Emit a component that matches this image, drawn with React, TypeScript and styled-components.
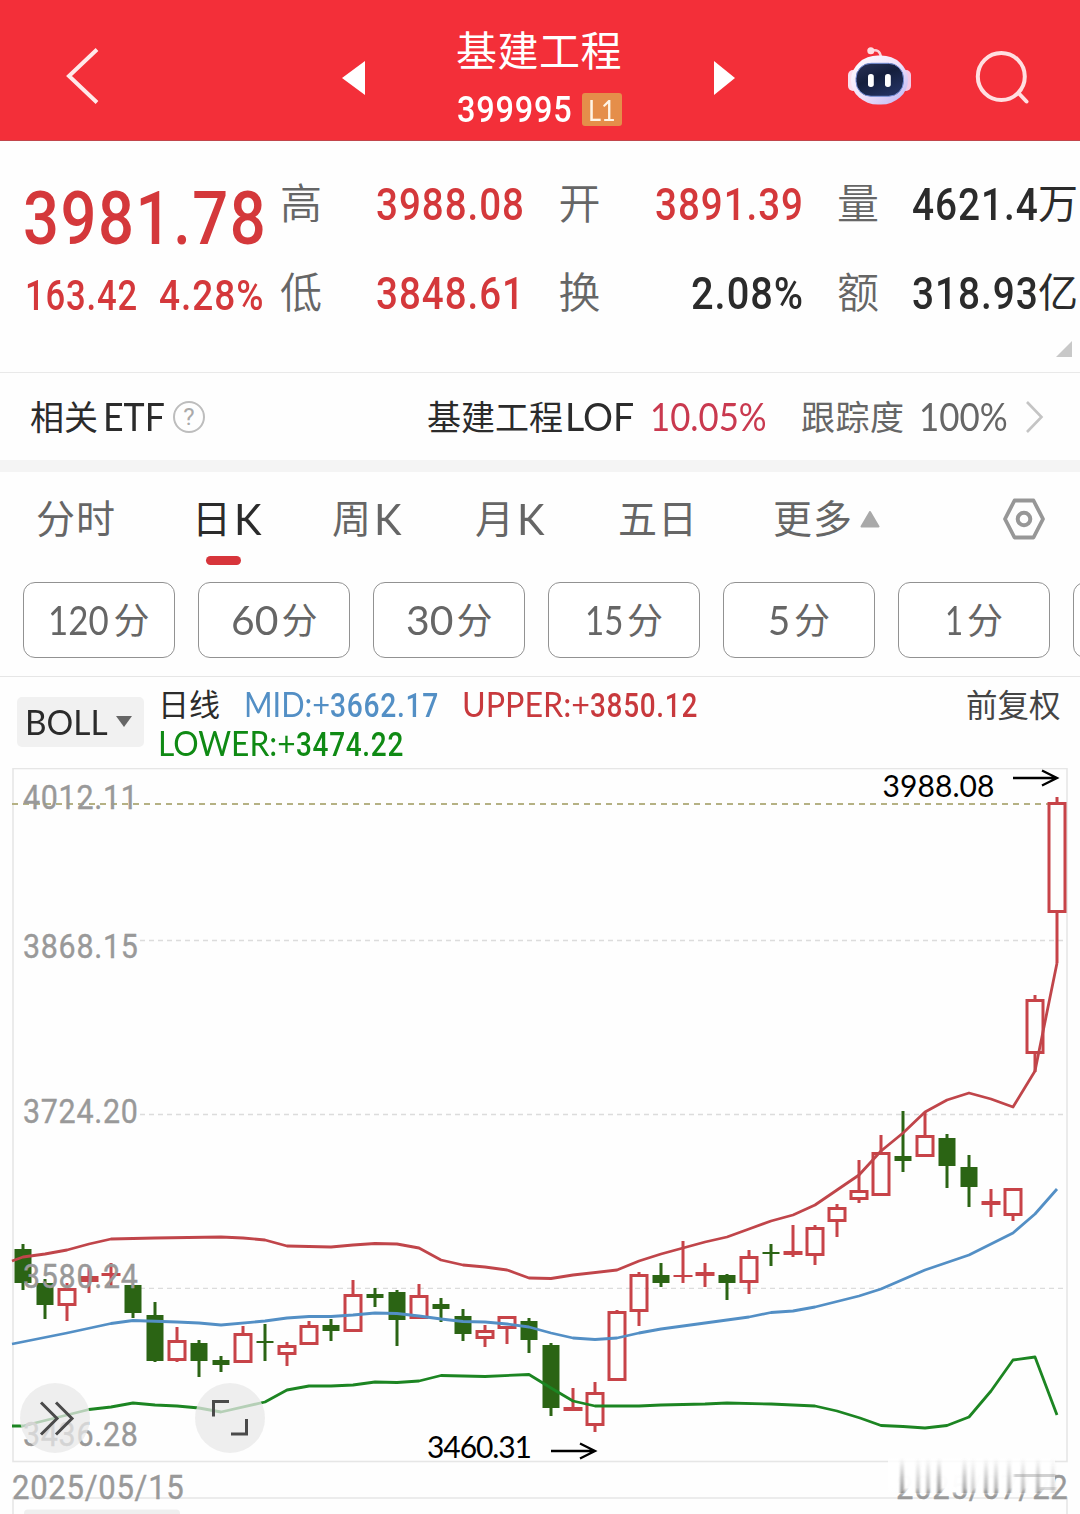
import React, { useLayoutEffect, useRef, useState } from 'react';
import styled, { createGlobalStyle } from 'styled-components';

const DIGITS = `Roboto, "Noto Sans CJK SC", sans-serif`;
const SANS = `Lato, "Noto Sans CJK SC", sans-serif`;
const CJK = `"Noto Sans CJK SC", sans-serif`;

const RED = '#d4383b';
const INK = '#2b2b2b';
const GREY = '#666666';

const GlobalStyle = createGlobalStyle`
  body { margin: 0; background: #fff; }
  * { box-sizing: border-box; }
`;

const Page = styled.div`
  width: 1080px;
  height: 1514px;
  overflow: hidden;
  display: flex;
  flex-direction: column;
  background: #fefefe;
  color: ${INK};
  font-family: ${CJK};
`;

/* ---------- text fitted to a given width ---------- */

const FitBox = styled.span<{ $w: number; $size: number; $color?: string; $weight?: number; $font?: string; $dy?: number; $ml?: number; $gap: number }>`
  display: block;
  flex: none;
  width: ${p => p.$w}px;
  height: ${p => p.$size}px;
  line-height: ${p => p.$size}px;
  margin-left: ${p => p.$ml ?? 0}px;
  white-space: nowrap;
  font-family: ${p => p.$font ?? DIGITS};
  font-size: ${p => p.$size}px;
  font-weight: ${p => p.$weight ?? 400};
  letter-spacing: ${p => p.$gap}px;
  color: ${p => p.$color ?? 'inherit'};
  translate: 0 ${p => p.$dy ?? 0}px;
`;

const FitInner = styled.span`
  display: inline-block;
  transform-origin: 0 50%;
`;

type FitProps = {
  w: number; size: number; color?: string; weight?: number; font?: string; dy?: number; ml?: number; children: string;
};

function Fit({ w, size, color, weight, font, dy, ml, children }: FitProps) {
  const ref = useRef<HTMLSpanElement>(null);
  const [k, setK] = useState(1);
  const gap = font ? 0 : size * 0.025;
  useLayoutEffect(() => {
    if (ref.current) setK(w / (ref.current.offsetWidth - gap));
  }, [w, gap, children]);
  return (
    <FitBox $w={w} $size={size} $color={color} $weight={weight} $font={font} $dy={dy} $ml={ml} $gap={gap}>
      <FitInner ref={ref} style={{ transform: `scaleX(${k})` }}>{children}</FitInner>
    </FitBox>
  );
}

/* ---------- header ---------- */

const Header = styled.header`
  height: 141px;
  flex: none;
  display: grid;
  grid-template-columns: 340px 28px 344px 24px 110px 66px 168px;
  align-items: center;
  background: #f32f39;
  border-bottom: 1px solid #c2454b;
`;

const BackArea = styled.div`
  padding: 12px 0 0 64px;
  svg { display: block; }
`;

const IconArea = styled.div<{ $top?: number; $left?: number }>`
  padding: ${p => p.$top ?? 0}px 0 0 ${p => p.$left ?? 0}px;
  svg { display: block; }
`;

const TitleBlock = styled.div`
  display: flex;
  flex-direction: column;
  align-items: center;
  padding-top: 6px;
  color: #fff;
`;

const Title = styled.h1`
  margin: 0;
  font-size: 41px;
  line-height: 56px;
  font-weight: 400;
  letter-spacing: 0.5px;
  translate: -1px 0;
`;

const CodeLine = styled.div`
  display: flex;
  align-items: center;
  height: 34px;
  margin-top: 17px;
  translate: -1px 0;
`;

const Level = styled.span`
  display: flex;
  align-items: center;
  justify-content: center;
  width: 40px;
  height: 33px;
  margin-left: 10px;
  border-radius: 3px;
  background: #e58e4a;
  color: #fff4e6;
`;

/* ---------- quote ---------- */

const Quote = styled.section`
  position: relative;
  height: 232px;
  flex: none;
  display: flex;
  border-bottom: 1px solid #e9e9e9;
`;

const PriceBlock = styled.div`
  width: 280px;
  flex: none;
  padding: 40px 0 0 23px;
  color: ${RED};
`;

const ChangeRow = styled.div`
  display: flex;
  margin-top: 19px;
  padding-left: 2px;
`;

const Stats = styled.div`
  display: grid;
  grid-template-columns: 244px 244px 240px;
  grid-template-rows: 89px 89px;
  column-gap: 34.5px;
  padding-top: 19px;
  flex: none;
`;

const Stat = styled.div`
  display: flex;
  align-items: center;
  justify-content: space-between;
`;

const StatLabel = styled.span`
  font-size: 42px;
  line-height: 60px;
  color: ${GREY};
  font-weight: 350;
  translate: 0 -4px;
`;

const StatValue = styled.span`
  display: flex;
  align-items: center;
`;

const Unit = styled.span`
  font-size: 40px;
  line-height: 60px;
  translate: 0 -4px;
  width: 39px;
`;

const Corner = styled.i`
  position: absolute;
  right: 8px;
  bottom: 15px;
  border-left: 16px solid transparent;
  border-bottom: 16px solid #c8c8c8;
`;

/* ---------- related fund ---------- */

const FundRow = styled.section`
  height: 87px;
  flex: none;
  display: flex;
  align-items: center;
  padding-left: 30px;
`;

const Han = styled.span<{ $size: number; $color?: string; $ls?: number; $dy?: number; $w?: number; $ml?: number }>`
  flex: none;
  font-size: ${p => p.$size}px;
  line-height: ${p => p.$size}px;
  color: ${p => p.$color ?? INK};
  letter-spacing: ${p => p.$ls ?? 0}px;
  width: ${p => (p.$w ? `${p.$w}px` : 'auto')};
  margin-left: ${p => p.$ml ?? 0}px;
  white-space: nowrap;
  translate: 0 ${p => p.$dy ?? 0}px;
`;

const Help = styled.span`
  flex: none;
  width: 32px;
  height: 32px;
  margin-left: 8px;
  border: 2px solid #bdbdbd;
  border-radius: 50%;
  display: flex;
  align-items: center;
  justify-content: center;
  font: 24px ${DIGITS};
  color: #aaa;
`;

const FundLink = styled.div`
  display: flex;
  align-items: center;
  margin-left: 222px;
`;

const Band = styled.div`
  height: 12px;
  flex: none;
  background: #f4f4f4;
`;

/* ---------- tabs and periods ---------- */

const Tabs = styled.nav`
  height: 110px;
  flex: none;
  display: grid;
  grid-template-columns: 156px 140px 143px 143px 155px 229px 1fr;
  padding-left: 36px;
`;

const Tab = styled.div<{ $on?: boolean }>`
  position: relative;
  display: flex;
  align-items: center;
  height: 94px;
  color: ${p => (p.$on ? INK : GREY)};
`;

const ActiveBar = styled.i`
  position: absolute;
  left: 14px;
  top: 84px;
  width: 35px;
  height: 9px;
  border-radius: 5px;
  background: #d7353b;
`;

const UpMark = styled.svg`
  margin-left: 7px;
`;

const Periods = styled.div`
  height: 95px;
  flex: none;
  display: flex;
  gap: 23px;
  padding-left: 23px;
  border-bottom: 1px solid #e6e6e6;
`;

const Period = styled.button`
  flex: none;
  width: 152px;
  height: 76px;
  padding: 0;
  border: 1px solid #929292;
  border-radius: 12px;
  background: #fff;
  display: flex;
  align-items: center;
  justify-content: center;
  gap: 4px;
  color: ${GREY};
  font-family: ${CJK};
`;

/* ---------- indicator bar ---------- */

const Indicator = styled.section`
  height: 91px;
  flex: none;
  display: flex;
  padding-left: 17px;
`;

const Picker = styled.div`
  flex: none;
  width: 127px;
  height: 50px;
  margin-top: 20px;
  padding-left: 8px;
  border-radius: 5px;
  background: #f1f1f1;
  display: flex;
  align-items: center;
`;

const DownMark = styled.i`
  margin-left: 8px;
  margin-top: -2px;
  border: 8.5px solid transparent;
  border-top: 11px solid #666;
  border-bottom: 0;
`;

const Readings = styled.div`
  width: 822px;
  padding: 8px 0 0 14px;
`;

const ReadingLine = styled.div`
  display: flex;
  align-items: center;
  height: 39px;
`;

const Adjust = styled.div`
  padding-top: 11px;
`;

/* ---------- chart ---------- */

const ChartArea = styled.section`
  position: relative;
  height: 746px;
  flex: none;
`;

const RoundButton = styled.button<{ $x: number }>`
  position: absolute;
  left: ${p => p.$x}px;
  top: 615px;
  width: 70px;
  height: 70px;
  padding: 0;
  border: 0;
  border-radius: 50%;
  background: rgba(232, 232, 232, 0.75);
  svg { display: block; }
`;

type Candle = [number, number, number, number, 'u' | 'd'];

// wick top, body top, body bottom, wick bottom, direction
const candles: Candle[] = [
  [1244, 1249, 1283, 1290, 'd'], [1279, 1283, 1305, 1319, 'd'], [1283, 1288, 1306, 1321, 'u'],
  [1268, 1276, 1282, 1293, 'u'], [1263, 1273, 1276, 1286, 'u'], [1285, 1285, 1313, 1318, 'd'],
  [1302, 1315, 1361, 1362, 'd'], [1327, 1340, 1361, 1362, 'u'], [1340, 1343, 1361, 1377, 'd'],
  [1356, 1360, 1365, 1372, 'd'], [1326, 1333, 1363, 1363, 'u'], [1324, 1341, 1343, 1361, 'd'],
  [1342, 1345, 1355, 1366, 'u'], [1321, 1325, 1345, 1345, 'u'], [1319, 1325, 1331, 1341, 'd'],
  [1280, 1294, 1332, 1332, 'u'], [1288, 1294, 1298, 1307, 'd'], [1290, 1292, 1320, 1346, 'd'],
  [1284, 1295, 1319, 1319, 'u'], [1298, 1304, 1309, 1322, 'd'], [1309, 1316, 1334, 1341, 'd'],
  [1325, 1330, 1339, 1347, 'u'], [1316, 1316, 1329, 1344, 'u'], [1318, 1321, 1340, 1353, 'd'],
  [1343, 1345, 1408, 1416, 'd'], [1388, 1407, 1411, 1411, 'u'], [1382, 1392, 1426, 1432, 'u'],
  [1310, 1311, 1381, 1381, 'u'], [1272, 1274, 1312, 1326, 'u'], [1263, 1275, 1283, 1287, 'd'],
  [1241, 1275, 1277, 1283, 'u'], [1263, 1272, 1276, 1287, 'u'], [1274, 1275, 1283, 1300, 'd'],
  [1250, 1256, 1283, 1294, 'u'], [1244, 1252, 1254, 1266, 'd'], [1225, 1251, 1255, 1257, 'u'],
  [1225, 1227, 1256, 1265, 'u'], [1204, 1207, 1222, 1237, 'u'], [1160, 1190, 1200, 1203, 'u'],
  [1135, 1152, 1196, 1196, 'u'], [1111, 1156, 1161, 1172, 'd'], [1112, 1135, 1157, 1157, 'u'],
  [1134, 1138, 1166, 1188, 'd'], [1155, 1167, 1187, 1207, 'd'], [1189, 1201, 1205, 1217, 'u'],
  [1188, 1188, 1216, 1221, 'u'], [995, 999, 1054, 1072, 'u'], [797, 802, 913, 963, 'u'],
];

const upper = '12,1261 23,1257 45,1254 67,1250 89,1244 111,1239 155,1238 221,1237 243,1238 265,1240 287,1246 331,1247 353,1245 375,1243.5 397,1244 419,1248 441,1260 463,1265 485,1267 507,1270 529,1278 551,1278.5 573,1275 617,1270 639,1261 661,1254 683,1248 705,1242 727,1237 749,1229 771,1221 793,1215 815,1205 837,1190 859,1175 881,1151 903,1133 925,1112 947,1100 969,1093 991,1099 1013,1107 1035,1071 1057,963';
const mid = '12,1344 67,1333 111,1323.5 133,1320.5 177,1322 199,1323 221,1325 265,1321 287,1318 309,1316.5 331,1316.5 353,1315 375,1313 397,1313.5 419,1316 441,1319 463,1321.5 485,1322 507,1324 529,1327 551,1333 573,1338 595,1339.5 617,1338 639,1333 661,1329 705,1323 749,1317 771,1312.5 793,1311 815,1307 859,1296 881,1289 925,1270 969,1255 1013,1233 1035,1214 1057,1189';
const lower = '12,1426 23,1426 89,1409.5 111,1407 133,1403 155,1405 177,1406 199,1408 221,1412 265,1402 287,1390 309,1386 331,1386 353,1385 375,1382 397,1382.5 419,1381 441,1375.5 485,1376.5 529,1374.5 551,1388 573,1401 595,1406 639,1406 661,1405 705,1404 727,1403 771,1404 815,1406 837,1411 860,1418 881,1425.5 903,1426.5 925,1428 947,1425.5 969,1417 991,1391 1013,1360 1035,1357 1057,1415';

const UP = '#c74348';
const DOWN = '#2b6414';

function CandleMark({ x, c }: { x: number; c: Candle }) {
  const [wt, bt, bb, wb, dir] = c;
  const color = dir === 'u' ? UP : DOWN;
  const hollow = dir === 'u' && bb - bt > 8;
  return (
    <g fill={color}>
      {wt < bt && <rect x={x - 1.5} y={wt} width={3} height={bt - wt + 1} />}
      {wb > bb && <rect x={x - 1.5} y={bb - 1} width={3} height={wb - bb + 1} />}
      {hollow
        ? <rect x={x - 8} y={bt + 1.5} width={16} height={bb - bt - 3} fill="none" stroke={color} strokeWidth={3} />
        : <rect x={dir === 'u' ? x - 9.5 : x - 8.5} y={bt} width={dir === 'u' ? 19 : 17} height={bb - bt} />}
    </g>
  );
}

const Scale = styled.text`
  font-family: ${DIGITS};
  font-size: 34px;
  letter-spacing: 0.8px;
  fill: #999;
  stroke: #999;
  stroke-width: 0.4px;
`;

const Callout = styled.text`
  font-family: ${SANS};
  font-size: 30px;
  fill: #000;
`;

const smears: [number, number][] = [
  [902, 1], [918, 0.6], [928, 0.65], [939, 1], [964.5, 0.9], [973, 0.5], [986, 0.8], [996, 0.75], [1009, 0.75], [1023, 0.65], [1038, 0.8], [1053, 0.4],
];

function KChart() {
  return (
    <svg width="1080" height="746" viewBox="0 768 1080 746" display="block">
      <defs>
        <linearGradient id="fade" x1="0" y1="0" x2="0" y2="1">
          <stop offset="0" stopColor="#fff" stopOpacity="0.7" />
          <stop offset="0.2" stopColor="#fff" stopOpacity="1" />
          <stop offset="0.78" stopColor="#fff" stopOpacity="0.97" />
          <stop offset="1" stopColor="#fff" stopOpacity="0" />
        </linearGradient>
        <linearGradient id="smear" x1="0" y1="0" x2="0" y2="1">
          <stop offset="0" stopColor="#808080" stopOpacity="0" />
          <stop offset="0.6" stopColor="#808080" stopOpacity="0.5" />
          <stop offset="1" stopColor="#808080" stopOpacity="0.8" />
        </linearGradient>
        <filter id="soft" x="-5%" y="-5%" width="110%" height="110%"><feGaussianBlur stdDeviation="0.9 0.5" /></filter>
      </defs>
      <g stroke="#e6e6e6" strokeWidth="1.6" fill="none">
        <rect x="13" y="768.5" width="1054" height="693" />
        <path d="M13 1514V1498H1067V1514" />
      </g>
      <rect x="24" y="1509.5" width="156" height="20" rx="4" fill="#efefef" />
      <g stroke="#dcdcdc" strokeWidth="1.3" strokeDasharray="5 4">
        <path d="M140 940.5H1066M140 1114.5H1066M140 1288.3H1066" />
      </g>
      <path d="M12 804H1048" stroke="#b5b184" strokeWidth="1.8" strokeDasharray="6 5" />
      {candles.map((c, i) => <CandleMark key={i} x={23 + i * 22} c={c} />)}
      <g fill="none" strokeWidth="2.8" strokeLinejoin="round">
        <polyline points={mid} stroke="#538fc5" />
        <polyline points={upper} stroke="#c0454a" />
        <polyline points={lower} stroke="#1c8522" />
      </g>
      <Scale x="23" y="809" textLength="115.500" lengthAdjust="spacingAndGlyphs">4012.11</Scale>
      <Scale x="23" y="958" textLength="115.500" lengthAdjust="spacingAndGlyphs">3868.15</Scale>
      <Scale x="23" y="1123" textLength="115.500" lengthAdjust="spacingAndGlyphs">3724.20</Scale>
      <Scale x="23" y="1288" textLength="115.500" lengthAdjust="spacingAndGlyphs">3580.24</Scale>
      <Scale x="23" y="1446" textLength="115.500" lengthAdjust="spacingAndGlyphs">3436.28</Scale>
      <Scale x="12" y="1498.5" textLength="172.500" lengthAdjust="spacingAndGlyphs">2025/05/15</Scale>
      <Scale x="896" y="1498.5" textLength="172.500" lengthAdjust="spacingAndGlyphs">2025/07/22</Scale>
      <rect x="888" y="1458" width="167" height="38" fill="url(#fade)" />
      <g filter="url(#soft)">
        {smears.map(([x, o]) => <rect key={x} x={x - 2} y="1458" width="4" height="35" fill="url(#smear)" opacity={o} />)}
        <rect x="1014" y="1474" width="42" height="3" fill="#999" opacity="0.45" />
        <rect x="1040" y="1487" width="16" height="3" fill="#999" opacity="0.35" />
      </g>
      <Callout x="882.500" y="797" textLength="112" lengthAdjust="spacing">3988.08</Callout>
      <Callout x="427" y="1458" textLength="105" lengthAdjust="spacing">3460.31</Callout>
      <g fill="none" stroke="#000" strokeWidth="2.3">
        <path d="M1013 778H1057M1042 770.5L1057 778L1042 785.5" />
        <path d="M551 1451H595M580 1443.5L595 1451L580 1458.5" />
      </g>
    </svg>
  );
}

function Robot() {
  return (
    <svg width="66" height="62" viewBox="846 45 66 62">
      <defs>
        <linearGradient id="shell" x1="0" y1="0" x2="1" y2="1">
          <stop offset="0" stopColor="#fff" /><stop offset="0.5" stopColor="#f1e3fa" /><stop offset="1" stopColor="#b9b3f3" />
        </linearGradient>
        <linearGradient id="visor" x1="0" y1="0" x2="0.6" y2="1">
          <stop offset="0" stopColor="#2b3357" /><stop offset="0.5" stopColor="#151f3d" /><stop offset="1" stopColor="#22305f" />
        </linearGradient>
      </defs>
      <path d="M871 51C877 49 880 51 881 57" fill="none" stroke="#fbd3da" strokeWidth="2.4" />
      <circle cx="870.8" cy="50.8" r="3.5" fill="#ffdde2" />
      <rect x="848" y="70" width="10" height="21" rx="5" fill="#fbdfee" />
      <rect x="901" y="70" width="10" height="21" rx="5" fill="#f3c9e6" />
      <rect x="851" y="55.500" width="57" height="49" rx="27" ry="24.500" fill="url(#shell)" />
      <rect x="856" y="63.300" width="47.500" height="33" rx="15" fill="url(#visor)" stroke="#7690d8" strokeWidth="1" />
      <rect x="868" y="74" width="5.8" height="13" rx="2.7" fill="#fff" />
      <rect x="885" y="74" width="5.8" height="13" rx="2.7" fill="#fff" />
    </svg>
  );
}

const tabs: { han: string; latin?: string; on?: boolean; more?: boolean }[] = [
  { han: '分时' },
  { han: '日', latin: 'K', on: true },
  { han: '周', latin: 'K' },
  { han: '月', latin: 'K' },
  { han: '五日' },
  { han: '更多', more: true },
];

const periods: [string, number][] = [['120', 61], ['60', 47], ['30', 47], ['15', 38], ['5', 22], ['1', 18]];

export default function App() {
  return (
    <Page>
      <GlobalStyle />
      <Header>
        <BackArea>
          <svg width="38" height="60" viewBox="64 46 38 60" fill="none" stroke="#ffe9ea" strokeWidth="4">
            <path d="M97 49.5L69 76L97 102.5" />
          </svg>
        </BackArea>
        <IconArea $top={16} $left={2}>
          <svg width="24" height="34" viewBox="0 0 24 34"><path d="M0 17L23 0V34Z" fill="#fff" /></svg>
        </IconArea>
        <TitleBlock>
          <Title>基建工程</Title>
          <CodeLine>
            <Fit w={115} size={37} weight={500}>399995</Fit>
            <Level><Fit w={28} size={29} font={SANS}>L1</Fit></Level>
          </CodeLine>
        </TitleBlock>
        <IconArea $top={16} $left={2}>
          <svg width="22" height="34" viewBox="0 0 22 34"><path d="M0 0L21 17L0 34Z" fill="#fff" /></svg>
        </IconArea>
        <span />
        <IconArea $top={11}><Robot /></IconArea>
        <IconArea $top={14} $left={62}>
          <svg width="56" height="56" viewBox="974 49 56 56" fill="none" stroke="#ffdfe1" strokeWidth="4" strokeLinecap="round">
            <circle cx="1001.3" cy="76.5" r="23.5" />
            <path d="M1018.5 93L1026.5 101.5" />
          </svg>
        </IconArea>
      </Header>

      <Quote>
        <PriceBlock>
          <Fit w={243} size={75} weight={500}>3981.78</Fit>
          <ChangeRow>
            <Fit w={112} size={42} weight={500}>163.42</Fit>
            <Fit w={104} size={42} weight={500} ml={22}>4.28%</Fit>
          </ChangeRow>
        </PriceBlock>
        <Stats>
          <Stat><StatLabel>高</StatLabel><Fit w={148} size={44} weight={500} color={RED}>3988.08</Fit></Stat>
          <Stat><StatLabel>开</StatLabel><Fit w={148} size={44} weight={500} color={RED}>3891.39</Fit></Stat>
          <Stat><StatLabel>量</StatLabel><StatValue><Fit w={126} size={44} weight={500}>4621.4</Fit><Unit>万</Unit></StatValue></Stat>
          <Stat><StatLabel>低</StatLabel><Fit w={148} size={44} weight={500} color={RED}>3848.61</Fit></Stat>
          <Stat><StatLabel>换</StatLabel><Fit w={112} size={44} weight={500}>2.08%</Fit></Stat>
          <Stat><StatLabel>额</StatLabel><StatValue><Fit w={126} size={44} weight={500}>318.93</Fit><Unit>亿</Unit></StatValue></Stat>
        </Stats>
        <Corner />
      </Quote>

      <FundRow>
        <Han $size={34} $w={73} $dy={-1}>相关</Han>
        <Fit w={62} size={38} font={SANS} dy={-1}>ETF</Fit>
        <Help>?</Help>
        <FundLink>
          <Han $size={34} $w={138} $dy={-1}>基建工程</Han>
          <Fit w={69} size={38} font={SANS} dy={-1}>LOF</Fit>
          <Fit w={117} size={38} font={SANS} color="#c9394f" ml={16} dy={-1}>10.05%</Fit>
          <Han $size={34} $color={GREY} $w={103} $ml={34} $dy={-1} $ls={0.5}>跟踪度</Han>
          <Fit w={89} size={38} font={SANS} color={GREY} ml={15} dy={-1}>100%</Fit>
          <IconArea $left={17}>
            <svg width="20" height="34" viewBox="0 0 20 34" fill="none" stroke="#c4c4c4" strokeWidth="2.6"><path d="M2 2L16.500 17L2 32" /></svg>
          </IconArea>
        </FundLink>
      </FundRow>
      <Band />

      <Tabs>
        {tabs.map(t => (
          <Tab key={t.han} $on={t.on}>
            <Han $size={39} $color="inherit" $w={t.latin ? 42 : undefined} $ls={t.latin ? 0 : 1} $dy={-3}>{t.han}</Han>
            {t.latin && <Fit w={28} size={43} font={SANS} dy={-1}>{t.latin}</Fit>}
            {t.more && <UpMark width="20" height="17" viewBox="0 0 20 17"><path d="M10 1L18.500 15.500H1.500Z" fill="#a9a9a9" stroke="#a9a9a9" strokeWidth="2" strokeLinejoin="round" /></UpMark>}
            {t.on && <ActiveBar />}
          </Tab>
        ))}
        <Tab>
          <svg width="44" height="42" viewBox="0 0 44 42" fill="none" stroke="#979797" strokeWidth="3.8" strokeLinejoin="round">
            <path d="M12.500 2.500H31.500L41 21L31.500 39.500H12.500L3 21Z" />
            <circle cx="22" cy="21" r="6.300" strokeWidth="4" />
          </svg>
        </Tab>
      </Tabs>

      <Periods>
        {periods.map(([n, w]) => (
          <Period key={n}>
            <Fit w={w} size={40} font={SANS}>{n}</Fit>
            <Han $size={36} $color={GREY} $dy={-2}>分</Han>
          </Period>
        ))}
        <Period />
      </Periods>

      <Indicator>
        <Picker>
          <Fit w={83} size={35} font={SANS} dy={-1}>BOLL</Fit>
          <DownMark />
        </Picker>
        <Readings>
          <ReadingLine>
            <Han $size={31} $w={86} $dy={-2}>日线</Han>
            <Fit w={86} size={34} font={SANS} color="#538fc5" dy={-1}>MID:+</Fit>
            <Fit w={108} size={34} color="#538fc5" weight={500}>3662.17</Fit>
            <Fit w={128} size={34} font={SANS} color="#c8393d" ml={24} dy={-1}>UPPER:+</Fit>
            <Fit w={107} size={34} color="#c8393d" weight={500}>3850.12</Fit>
          </ReadingLine>
          <ReadingLine>
            <Fit w={138} size={34} font={SANS} color="#0f8a14" dy={-1}>LOWER:+</Fit>
            <Fit w={107} size={34} color="#0f8a14" weight={500}>3474.22</Fit>
          </ReadingLine>
        </Readings>
        <Adjust><Han $size={31.5} $color="#444">前复权</Han></Adjust>
      </Indicator>

      <ChartArea>
        <KChart />
        <RoundButton $x={20}>
          <svg width="70" height="70" viewBox="20 1383 70 70" fill="none" stroke="#4a4a4a" strokeWidth="3">
            <path d="M41 1402.500L57 1418.500L41 1434.500M56 1402.500L72 1418.500L56 1434.500" />
          </svg>
        </RoundButton>
        <RoundButton $x={195}>
          <svg width="70" height="70" viewBox="195 1383 70 70" fill="none" stroke="#4a4a4a" strokeWidth="3">
            <path d="M213.500 1416.500V1401.500H229M246.500 1419V1434H231" />
          </svg>
        </RoundButton>
      </ChartArea>
    </Page>
  );
}
